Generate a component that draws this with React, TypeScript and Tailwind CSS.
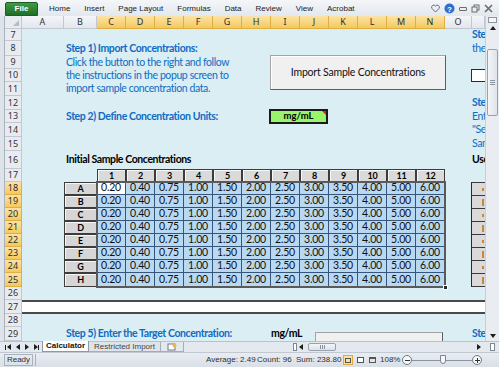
import React from "react";

const colHeads = [
  { l: "A", w: "w-[42px]", sel: false },
  { l: "B", w: "w-[33px]", sel: false },
  { l: "C", w: "w-[29px]", sel: true },
  { l: "D", w: "w-[29px]", sel: true },
  { l: "E", w: "w-[29px]", sel: true },
  { l: "F", w: "w-[29px]", sel: true },
  { l: "G", w: "w-[29px]", sel: true },
  { l: "H", w: "w-[29px]", sel: true },
  { l: "I", w: "w-[29px]", sel: true },
  { l: "J", w: "w-[29px]", sel: true },
  { l: "K", w: "w-[29px]", sel: true },
  { l: "L", w: "w-[29px]", sel: true },
  { l: "M", w: "w-[29px]", sel: true },
  { l: "N", w: "w-[29px]", sel: true },
  { l: "O", w: "w-[27px]", sel: false },
  { l: "", w: "w-[13px]", sel: false },
];

const rowHeads = [
  { n: 7, h: "h-[12px]" },
  { n: 8, h: "h-[15px]" },
  { n: 9, h: "h-[13px]" },
  { n: 10, h: "h-[13px]" },
  { n: 11, h: "h-[14px]" },
  { n: 12, h: "h-[14px]" },
  { n: 13, h: "h-[13px]" },
  { n: 14, h: "h-[14px]" },
  { n: 15, h: "h-[14px]" },
  { n: 16, h: "h-[18px]" },
  { n: 17, h: "h-[13px]" },
  { n: 18, h: "h-[13px]" },
  { n: 19, h: "h-[13px]" },
  { n: 20, h: "h-[13px]" },
  { n: 21, h: "h-[13px]" },
  { n: 22, h: "h-[13px]" },
  { n: 23, h: "h-[13px]" },
  { n: 24, h: "h-[13px]" },
  { n: 25, h: "h-[14px]" },
  { n: 26, h: "h-[13px]" },
  { n: 27, h: "h-[14px]" },
  { n: 28, h: "h-[13px]" },
  { n: 29, h: "h-[14px]" },
];

const values = ["0.20", "0.40", "0.75", "1.00", "1.50", "2.00", "2.50", "3.00", "3.50", "4.00", "5.00", "6.00"];
const wells = ["A", "B", "C", "D", "E", "F", "G", "H"];
const tabs = ["Home", "Insert", "Page Layout", "Formulas", "Data", "Review", "View", "Acrobat"];

function Tri({ dir }: { dir: "l" | "r" | "u" | "d" }) {
  const pts = { l: "5,1 5,7 1,4", r: "1,1 1,7 5,4", u: "1,6 7,6 4,2", d: "1,2 7,2 4,6" }[dir];
  return (
    <svg width="8" height="8" viewBox="0 0 8 8" className="shrink-0">
      <polygon points={pts} fill="#1d1d1d" />
    </svg>
  );
}

export default function App() {
  return (
    <div className="w-[499px] h-[367px] overflow-hidden bg-[#e4e9ef] flex flex-col font-['Lato',sans-serif] select-none">
      {/* ribbon tabs */}
      <div className="h-[16px] flex items-end bg-gradient-to-b from-[#f4f6f9] to-[#e3e8ee] relative font-['Liberation_Sans',sans-serif] text-[8px] text-[#222]">
        <div className="ml-[5px] w-[33px] h-[14px] bg-gradient-to-b from-[#3f9c43] to-[#1f6e26] border border-[#1b5e21] rounded-t-[2px] text-white font-bold flex items-center justify-center">
          File
        </div>
        <div className="flex gap-[14px] ml-[11px] h-[14px] items-center whitespace-nowrap">
          {tabs.map((t) => (
            <span key={t}>{t}</span>
          ))}
        </div>
        <div className="absolute right-[6px] top-[3px] flex items-center gap-[4px]">
          <svg width="9" height="9" viewBox="0 0 9 9">
            <path d="M4.5 8 L1 4.5 A1.8 1.8 0 0 1 4.5 2 A1.8 1.8 0 0 1 8 4.5 Z" fill="none" stroke="#6b6b6b" strokeWidth="1" />
          </svg>
          <svg width="11" height="11" viewBox="0 0 11 11">
            <circle cx="5.5" cy="5.5" r="5" fill="#2f6fd0" />
            <text x="5.5" y="8.5" textAnchor="middle" fontSize="8" fontWeight="bold" fill="#fff" fontFamily="Liberation Sans">?</text>
          </svg>
          <div className="w-[8px] h-[4px] border border-[#6b6b6b] rounded-[1px]" />
          <svg width="9" height="9" viewBox="0 0 9 9">
            <rect x="3" y="1" width="5" height="5" fill="none" stroke="#6b6b6b" />
            <rect x="1" y="3" width="5" height="5" fill="#e9edf2" stroke="#6b6b6b" />
          </svg>
          <svg width="9" height="9" viewBox="0 0 9 9">
            <path d="M1 1 L8 8 M8 1 L1 8" stroke="#6b6b6b" strokeWidth="1.6" />
          </svg>
        </div>
      </div>

      {/* sheet */}
      <div className="h-[325px] flex">
        <div className="w-[5px] bg-[#dfe4ea] border-r border-[#a9b3be]" />
        <div className="w-[480px] flex flex-col">
          {/* column header */}
          <div className="h-[13px] flex text-[9px] font-['Noto_Sans',sans-serif]">
            <div className="w-[17px] bg-[#e8ecf1] border-r border-b border-[#c1c8d1] relative">
              <div className="absolute right-[2px] bottom-[2px] w-0 h-0 border-l-[6px] border-l-transparent border-b-[6px] border-b-[#b5bcc6]" />
            </div>
            {colHeads.map((c, i) => (
              <div
                key={i}
                className={`${c.w} flex items-center justify-center border-r border-b ${
                  c.sel
                    ? "bg-gradient-to-b from-[#fbe3a6] to-[#f5c958] border-[#dfae45] text-[#2d2d2d]"
                    : "bg-gradient-to-b from-[#f3f5f8] to-[#e2e7ed] border-[#c1c8d1] text-[#333]"
                }`}
              >
                {c.l}
              </div>
            ))}
          </div>

          <div className="flex flex-1">
            {/* row headers */}
            <div className="w-[17px] flex flex-col font-['Noto_Sans',sans-serif] text-[9px]">
              {rowHeads.map((r) => {
                const sel = r.n >= 18 && r.n <= 25;
                return (
                  <div
                    key={r.n}
                    className={`${r.h} flex items-center justify-center border-b border-r ${
                      sel
                        ? "bg-gradient-to-b from-[#fbe3a6] to-[#f5c958] border-[#dfae45] text-[#2d2d2d]"
                        : "bg-[#e8ecf1] border-[#c1c8d1] text-[#333]"
                    }`}
                  >
                    {r.n}
                  </div>
                );
              })}
            </div>

            {/* cells */}
            <div className="w-[463px] h-[312px] overflow-hidden bg-[#daeef3] grid grid-cols-[42px_33px_repeat(12,29px)_27px_13px] grid-rows-[12px_15px_13px_13px_14px_14px_13px_14px_14px_18px_13px_13px_13px_13px_13px_13px_13px_13px_14px_13px_14px_13px_14px] text-[10.5px] tracking-[-0.4px] whitespace-nowrap">
              <div className="col-start-2 col-span-8 row-start-2 flex items-center pl-[2px] font-bold text-[#0f6cc4]">
                Step 1) Import Concentrations:
              </div>
              <div className="col-start-2 col-span-8 row-start-3 flex items-center pl-[2px] text-[#0f6cc4]">
                Click the button to the right and follow
              </div>
              <div className="col-start-2 col-span-8 row-start-4 flex items-center pl-[2px] text-[#0f6cc4]">
                the instructions in the popup screen to
              </div>
              <div className="col-start-2 col-span-8 row-start-5 flex items-center pl-[2px] text-[#0f6cc4]">
                import sample concentration data.
              </div>
              <div className="col-start-9 col-span-6 row-start-3 row-span-3 self-start -ml-[1px] -mt-[1px] w-[176px] h-[35px] bg-[#f0f0f0] border border-[#a3a3a3] border-r-[#5e5e5e] border-b-[#5e5e5e] shadow-[inset_1px_1px_0_#ffffff] flex items-center justify-center text-[10.5px] tracking-[-0.2px] text-[#111]">
                Import Sample Concentrations
              </div>

              <div className="col-start-2 col-span-8 row-start-7 flex items-center pl-[2px] font-bold text-[#0f6cc4]">
                Step 2) Define Concentration Units:
              </div>
              <div className="col-start-9 col-span-2 row-start-7 -ml-[2px] -mt-[1px] w-[59px] h-[15px] bg-[#99f46b] border-2 border-[#1a1a1a] relative flex items-center justify-center font-bold text-[9.5px] tracking-normal text-black">
                mg/mL
                <div className="absolute right-0 top-0 w-0 h-0 border-l-[4px] border-l-transparent border-t-[4px] border-t-[#e02020]" />
              </div>

              <div className="col-start-2 col-span-8 row-start-10 flex items-end pb-[1px] pl-[2px] font-bold text-black">
                Initial Sample Concentrations
              </div>

              {/* table */}
              <div className="col-start-2 col-span-13 row-start-11 row-span-9 relative tracking-normal">
                <div className="grid grid-cols-[33px_repeat(12,29px)] grid-rows-[13px_13px_13px_13px_13px_13px_13px_13px_14px] text-[10.5px] tracking-[-0.2px]">
                  <div />
                  {values.map((_, i) => (
                    <div
                      key={i}
                      className="bg-[#dadada] border border-[#3c3c3c] shadow-[inset_1px_1px_0_#f6f6f6] flex items-center justify-center font-bold text-[9px] text-black"
                    >
                      {i + 1}
                    </div>
                  ))}
                  {wells.map((w, r) => (
                    <React.Fragment key={w}>
                      <div className="bg-[#d6d6d6] border border-[#3c3c3c] shadow-[inset_1px_1px_0_#f6f6f6] flex items-center justify-center font-bold text-[9px] text-black">
                        {w}
                      </div>
                      {values.map((v, i) => (
                        <div
                          key={i}
                          className={`border-r border-b border-[#35557c] flex items-center justify-center text-[#111] ${
                            r === 0 && i === 0 ? "bg-white" : "bg-[#b9d9f3]"
                          }`}
                        >
                          {v}
                        </div>
                      ))}
                    </React.Fragment>
                  ))}
                </div>
                {/* selection */}
                <div className="absolute left-[32px] top-[12px] w-[350px] h-[107px] border-2 border-[#5a5a5a] pointer-events-none" />
                <div className="absolute left-[379px] top-[116px] w-[5px] h-[5px] bg-[#2a2a2a] border border-white" />
              </div>

              {/* row 27 band */}
              <div className="col-start-1 col-span-16 row-start-21 bg-white border-y-2 border-[#4a4a4a]" />

              <div className="col-start-2 col-span-8 row-start-23 flex items-center pl-[2px] font-bold text-[#0f6cc4]">
                Step 5) Enter the Target Concentration:
              </div>
              <div className="col-start-9 col-span-2 row-start-23 flex items-center font-bold text-black">mg/mL</div>
              <div className="col-start-10 col-span-5 row-start-23 ml-[15px] mt-[5px] w-[128px] h-[20px] bg-[#f0f0f0] border border-[#a3a3a3] border-r-[#5e5e5e] flex items-start justify-center pt-[6px] text-[10.5px]">
                Select Wells to Fill
              </div>

              {/* column P (cut off by the scrollbar) */}
              <div className="col-start-16 row-start-1 flex items-center overflow-hidden font-bold text-[#0f6cc4]">Step 3)</div>
              <div className="col-start-16 row-start-2 flex items-center overflow-hidden text-[#0f6cc4]">the</div>
              <div className="col-start-16 row-start-4 -ml-[1px] bg-white border border-r-0 border-[#2a2a2a]" />
              <div className="col-start-16 row-start-6 flex items-center overflow-hidden font-bold text-[#0f6cc4]">Step 4)</div>
              <div className="col-start-16 row-start-7 flex items-center overflow-hidden text-[#0f6cc4]">Enter</div>
              <div className="col-start-16 row-start-8 flex items-center overflow-hidden text-[#0f6cc4]">"Select</div>
              <div className="col-start-16 row-start-9 flex items-center overflow-hidden text-[#0f6cc4]">Sample</div>
              <div className="col-start-16 row-start-10 flex items-end pb-[1px] overflow-hidden font-bold text-black">Use</div>
              <div className="col-start-16 row-start-12 row-span-8 -ml-[1px] flex flex-col border-l border-[#2a2a2a]">
                {wells.map((w, i) => (
                  <div
                    key={w}
                    className={`flex-1 bg-[#dadada] border-t border-[#3c3c3c] flex items-center justify-end pr-[1px] ${
                      i === 7 ? "border-b" : ""
                    }`}
                  >
                    <div className={`w-[2px] ${i % 2 === 1 ? "h-[7px]" : "h-[3px]"} bg-[#c9863a]`} />
                  </div>
                ))}
              </div>
              <div className="col-start-16 row-start-23 flex items-center overflow-hidden font-bold text-[#0f6cc4]">Step 6)</div>
            </div>
          </div>
        </div>

        {/* vertical scrollbar */}
        <div className="w-[14px] flex flex-col bg-[#e9edf1] border-l border-[#c7ced6]">
          <div className="h-[6px] mx-[2px] mt-[1px] border border-[#8d96a1] bg-[#f4f6f8]" />
          <div className="h-[10px] flex items-center justify-center">
            <Tri dir="u" />
          </div>
          <div className="flex-1 relative">
            <div className="absolute left-[1px] right-[1px] top-[16px] h-[67px] bg-gradient-to-r from-[#f4f6f8] to-[#dce2e9] border border-[#97a2ae] rounded-[2px] flex items-center justify-center">
              <div className="w-[5px] flex flex-col gap-[1px]">
                <div className="h-px bg-[#8a94a0]" />
                <div className="h-px bg-[#8a94a0]" />
                <div className="h-px bg-[#8a94a0]" />
              </div>
            </div>
          </div>
          <div className="h-[11px] flex items-center justify-center">
            <Tri dir="d" />
          </div>
        </div>
      </div>

      {/* sheet tabs + horizontal scrollbar */}
      <div className="h-[11px] flex items-stretch bg-[#e4e9ef] border-t border-[#b9c1cb] font-['Liberation_Sans',sans-serif] text-[8px] whitespace-nowrap">
        <div className="w-[42px] shrink-0 pl-[5px] flex items-center gap-[1px]">
          <div className="flex items-center"><div className="w-px h-[5px] bg-[#1d1d1d]" /><Tri dir="l" /></div>
          <Tri dir="l" />
          <Tri dir="r" />
          <div className="flex items-center"><Tri dir="r" /><div className="w-px h-[5px] bg-[#1d1d1d] -ml-[3px]" /></div>
        </div>
        <div className="w-[47px] shrink-0 bg-white border-x border-b border-[#8f99a5] flex items-center justify-center font-bold text-[#111] -mt-px">
          Calculator
        </div>
        <div className="w-[72px] shrink-0 bg-[#dfe4ea] border-r border-b border-[#a3acb7] flex items-center justify-center text-[#444]">
          Restricted Import
        </div>
        <div className="w-[23px] shrink-0 border-r border-b border-[#a3acb7] flex items-center justify-center">
          <svg width="10" height="8" viewBox="0 0 10 8">
            <rect x="1" y="1" width="7" height="6" fill="#fff" stroke="#6f7c8a" />
            <circle cx="7.5" cy="2.5" r="2" fill="#f3b834" />
          </svg>
        </div>
        <div className="w-[109px] shrink-0" />
        <div className="w-[4px] shrink-0 my-[1px] border border-[#7d8792] bg-white" />
        <div className="w-[10px] shrink-0 flex items-center justify-center"><Tri dir="l" /></div>
        <div className="flex-1 relative">
          <div className="absolute left-[1px] top-[1px] bottom-[1px] w-[28px] bg-gradient-to-b from-[#f4f6f8] to-[#dce2e9] border border-[#97a2ae] rounded-[2px] flex items-center justify-center gap-[1px]">
            <div className="w-px h-[4px] bg-[#8a94a0]" />
            <div className="w-px h-[4px] bg-[#8a94a0]" />
            <div className="w-px h-[4px] bg-[#8a94a0]" />
          </div>
        </div>
        <div className="w-[10px] shrink-0 flex items-center justify-center"><Tri dir="r" /></div>
        <div className="w-[14px] shrink-0 flex items-center justify-center">
          <div className="w-[5px] h-[8px] border border-[#7d8792] bg-white" />
        </div>
      </div>

      {/* status bar */}
      <div className="h-[15px] flex items-center bg-gradient-to-b from-[#e9edf2] to-[#d9dfe6] border-t border-[#c1c8d1] font-['Liberation_Sans',sans-serif] text-[8px] text-[#2f2f2f] whitespace-nowrap">
        <div className="shrink-0 ml-[4px] w-[29px] h-[12px] border border-[#a9b3be] flex items-center justify-center">Ready</div>
        <div className="shrink-0 w-[2px] h-[12px] ml-[2px] border-l border-[#a9b3be]" />
        <span className="shrink-0 ml-[169px] w-[51px]">Average: 2.49</span>
        <span className="shrink-0 w-[39px]">Count: 96</span>
        <span className="shrink-0 w-[47px]">Sum: 238.80</span>
        <div className="shrink-0 flex items-center gap-[2px] w-[37px]">
          <div className="w-[10px] h-[10px] border border-[#e2a93b] bg-[#fbe0a0] flex items-center justify-center">
            <div className="w-[6px] h-[5px] border border-[#555]" />
          </div>
          <div className="w-[10px] h-[10px] flex items-center justify-center">
            <div className="w-[7px] h-[6px] border border-[#555] bg-white" />
          </div>
          <div className="w-[10px] h-[10px] flex items-center justify-center">
            <div className="w-[7px] h-[6px] border border-[#555] border-t-2" />
          </div>
        </div>
        <span className="shrink-0 w-[22px]">108%</span>
        <div className="shrink-0 w-[10px] h-[10px] rounded-full border border-[#6f7a86] bg-[#f5f7f9] flex items-center justify-center">
          <div className="w-[5px] h-px bg-[#333]" />
        </div>
        <div className="shrink-0 w-[60px] h-[10px] relative flex items-center">
          <div className="w-full h-px bg-[#8a94a0]" />
          <div className="absolute left-[28px] top-0 w-[6px] h-[9px] bg-[#f5f7f9] border border-[#7a8591] rounded-b-[3px]" />
        </div>
        <div className="shrink-0 w-[10px] h-[10px] rounded-full border border-[#6f7a86] bg-[#f5f7f9] relative flex items-center justify-center">
          <div className="w-[5px] h-px bg-[#333]" />
          <div className="absolute w-px h-[5px] bg-[#333]" />
        </div>
      </div>
    </div>
  );
}
